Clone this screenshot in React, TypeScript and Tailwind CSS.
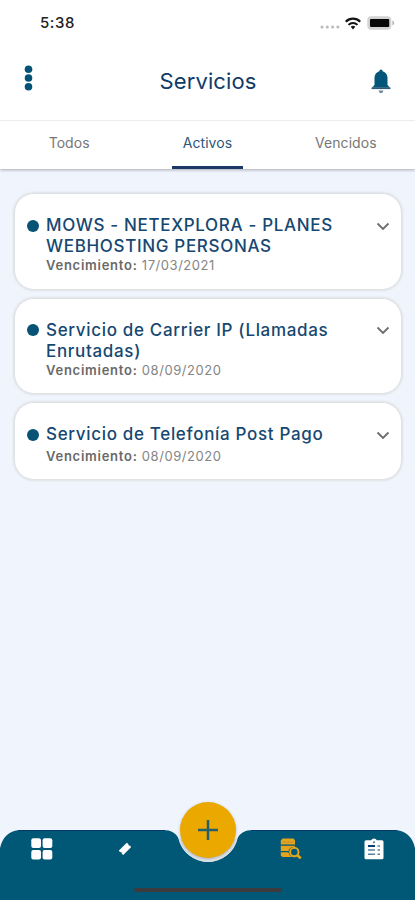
import { ReactNode } from "react";

const services = [
  { name: "MOWS - NETEXPLORA - PLANES WEBHOSTING PERSONAS", due: "17/03/2021" },
  { name: "Servicio de Carrier IP (Llamadas Enrutadas)", due: "08/09/2020" },
  { name: "Servicio de Telefonía Post Pago", due: "08/09/2020" },
];

function StatusBar() {
  return (
    <div className="flex h-[46px] items-center justify-between pl-[40px] pr-[20px]">
      <span className="text-[15px] font-medium tracking-[0.6px] text-[#222]">5:38</span>
      <div className="flex items-center">
        <svg width="20" height="4" viewBox="0 0 20 4" className="mr-[5px] mt-[8px]" fill="#b9b9b9">
          <circle cx="2" cy="2" r="1.5" />
          <circle cx="7.3" cy="2" r="1.5" />
          <circle cx="12.6" cy="2" r="1.5" />
          <circle cx="17.9" cy="2" r="1.5" />
        </svg>
        <svg width="16" height="13" viewBox="0 0 16 13" className="mr-[6px]" fill="none" stroke="#151515">
          <path d="M.8 4.7C4.8.7 11.2.7 15.2 4.7" strokeWidth="2.2" />
          <path d="M3.5 7.9c2.5-2.6 6.5-2.6 9 0" strokeWidth="2" />
          <path d="M5.7 9.8c1.3-1.3 3.3-1.3 4.6 0L8 12.5z" fill="#151515" stroke="none" />
        </svg>
        <svg width="28" height="14" viewBox="0 0 28 14">
          <rect x=".3" y=".3" width="24" height="13.4" rx="4" fill="#d2d2d2" />
          <rect x="3" y="3" width="19.2" height="8" rx="1" fill="#080808" />
          <path d="M25.4 4.6c2.4.8 2.4 4 0 4.8z" fill="#b5b5b5" />
        </svg>
      </div>
    </div>
  );
}

function Header() {
  return (
    <header className="flex h-[75px] items-center justify-between border-b border-[#ececec] pr-[24px] pb-[6px] pl-[24px]">
      <svg width="9" height="26" viewBox="0 0 9 26" className="mb-[4px]" fill="#035378">
        <circle cx="4.5" cy="4.2" r="3.8" />
        <circle cx="4.5" cy="13" r="3.8" />
        <circle cx="4.5" cy="21.8" r="3.8" />
      </svg>
      <h1 className="mt-[2px] ml-[12px] text-[22px] leading-none tracking-[0.1px] text-[#103b68]">Servicios</h1>
      <svg width="20" height="25" viewBox="0 0 20 25" className="mt-[3px]">
        <path
          d="M10 .5c1 0 1.500.8 1.600 1.700C14.600 3 16.300 5.400 16.500 8.600V16l2.600 2.700H.9L3.500 16V8.600C3.700 5.400 5.400 3 8.400 2.200 8.500 1.300 9 .5 10 .5z"
          fill="#035579"
        />
        <path d="M.5 18.500h19v1.600H.5z" fill="#33597a" />
        <path d="M7.700 21.500h4.600c-.2 1.600-1 2.600-2.300 2.600s-2.100-1-2.300-2.600z" fill="#70899a" />
      </svg>
    </header>
  );
}

function Tab({ label, active }: { label: string; active?: boolean }) {
  return (
    <div
      className={
        active
          ? "flex h-[48px] w-[71px] justify-center border-b-3 border-[#1c3768] pt-[12px] text-[#2b587c]"
          : "flex h-[48px] w-[71px] justify-center pt-[12px] text-[#777]"
      }
    >
      <span className="text-[14px] leading-[20px] tracking-[0.05px]">{label}</span>
    </div>
  );
}

function ServiceCard({ name, due }: { name: string; due: string }) {
  return (
    <article className="flex rounded-[19px] bg-white pt-[21px] pr-[11px] pb-[15.5px] pl-[12px] shadow-[0_0_2px_2px_#dfe2e5]">
      <span className="mt-[4.5px] mr-[7px] size-[12px] shrink-0 rounded-full bg-[#075376]" />
      <div className="flex-1">
        <h2 className="min-h-[23.5px] w-[310px] text-[17px] leading-[21px] font-medium tracking-[0.67px] text-[#164871]">
          {name}
        </h2>
        <p className="text-[13px] leading-[16px] tracking-[0.55px] text-[#858585]">
          <span className="font-semibold tracking-[0.75px] text-[#696969]">Vencimiento:</span> {due}
        </p>
      </div>
      <svg width="14" height="9" viewBox="0 0 14 9" className="mt-[6.5px] shrink-0" fill="none">
        <path d="M1.500 1.500 7 7l5.500-5.500" stroke="#6d6d6d" strokeWidth="1.800" />
      </svg>
    </article>
  );
}

function NavItem({ children }: { children: ReactNode }) {
  return <div className="flex h-[37px] w-[83px] items-center justify-center">{children}</div>;
}

function BottomNav() {
  return (
    <nav className="relative h-[98px]">
      {/* bar with the notch for the action button */}
      <svg width="415" height="98" viewBox="0 0 415 98" className="absolute inset-0">
        <path
          d="M0 98V46Q4 29 20 28H163C171 28 176 31 178.500 36.500A30.300 30.300 0 0 0 237.500 36.500C240 31 245 28 253 28H395Q411 29 415 46V98z"
          fill="#005776"
        />
        <path d="M18 28.500H165M251 28.500H397" stroke="#07396b" />
        <path d="M178.500 36.500A30.300 30.300 0 0 0 237.500 36.500z" fill="#dfe4e9" />
      </svg>
      <button className="absolute top-0 left-[180px] flex size-[56px] items-center justify-center rounded-full bg-[#eba900] shadow-[0_1px_3px_#00000040]">
        <svg width="22" height="22" viewBox="0 0 22 22">
          <path d="M11 1v20M1 11h20" stroke="#25606a" strokeWidth="2.500" />
        </svg>
      </button>
      <div className="relative flex pt-[28px]">
        <NavItem>
          <svg width="22" height="22" viewBox="0 0 22 22" fill="#fff">
            <rect x=".3" y=".3" width="9.700" height="9.700" rx="2" />
            <rect x="11.600" y=".3" width="9.700" height="9.700" rx="2" />
            <rect x=".3" y="11.900" width="9.700" height="9.700" rx="2" />
            <rect x="11.600" y="11.900" width="9.700" height="9.700" rx="2" />
          </svg>
        </NavItem>
        <NavItem>
          <svg width="14" height="14" viewBox="0 0 14 14" fill="#fff">
            <path d="M8.800.8 10.400 2a1.200 1.200 0 0 0 1.700 1.500L13 5.200 5.200 13 3.700 11.800A1.200 1.200 0 0 0 2 10.200L.9 8.500z" />
          </svg>
        </NavItem>
        <div className="w-[83px]" />
        <NavItem>
          <svg width="22" height="22" viewBox="0 0 22 22">
            <g fill="#e4a51d">
              <path d="M2.500.6h11L15 2.500v4H.8v-4zM.8 7.700H15v1C11.500 8.500 9 10.300 8.500 13H.8zM.8 14.200h7.700c.4 2.300 1.800 4 3.900 4.900H2.500L.8 17.600z" />
            </g>
            <circle cx="14.300" cy="14" r="4.200" fill="#005776" stroke="#e4a51d" strokeWidth="2" />
            <path d="m17.500 17.200 3.200 3.200" stroke="#e4a51d" strokeWidth="2.700" />
            <path d="M2 4.100h12" stroke="#c09239" strokeWidth="1" />
          </svg>
        </NavItem>
        <NavItem>
          <svg width="20" height="22" viewBox="0 0 20 22">
            <path
              d="M2 2.300h5.200a3 3 0 0 1 5.600 0H18q1.500 0 1.500 1.500v16q0 1.500-1.500 1.500H2Q.5 21.300.5 19.800v-16Q.5 2.300 2 2.300z"
              fill="#fff"
            />
            <circle cx="10" cy="4.200" r="1" fill="#35799b" />
            <path d="M4 8h7" stroke="#073f72" strokeWidth="2" />
            <path d="M4 12h7M4 16.300h7" stroke="#57849c" strokeWidth="1.600" />
            <path d="M13.500 8H16M13.500 12H16M13.500 16.300H16" stroke="#57849c" strokeWidth="1.600" />
          </svg>
        </NavItem>
      </div>
      <div className="relative mx-auto mt-[21px] h-[4px] w-[148px] rounded-full bg-[#3c3b3d]" />
    </nav>
  );
}

export default function App() {
  return (
    <div className="flex h-[900px] w-[415px] flex-col overflow-hidden bg-[#f0f4fc] font-['Inter',sans-serif]">
      <div className="relative bg-white shadow-[0_1px_3px_#0000004d]">
        <StatusBar />
        <Header />
        <div className="flex justify-around">
          <Tab label="Todos" />
          <Tab label="Activos" active />
          <Tab label="Vencidos" />
        </div>
      </div>
      <main className="flex flex-1 flex-col gap-[10px] pt-[25px] pr-[14px] pl-[15px]">
        {services.map((service) => (
          <ServiceCard key={service.name} name={service.name} due={service.due} />
        ))}
      </main>
      <BottomNav />
    </div>
  );
}
